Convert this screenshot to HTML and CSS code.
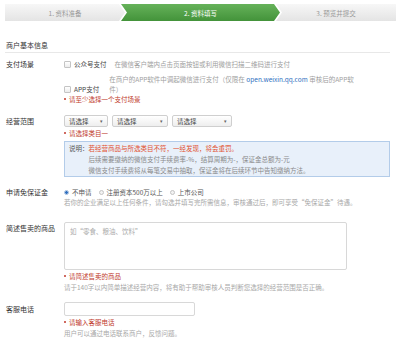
FILE: index.html
```html
<!DOCTYPE html>
<html lang="zh-CN">
<head>
  <meta charset="UTF-8" />
  <title>资料填写</title>
  <link rel="stylesheet" href="styles.css">
</head>
<body>
  <div class="steps">
    <div class="step step-first">1. 资料准备</div>
    <div class="step step-active">2. 资料填写</div>
    <div class="step step-last">3. 预览并提交</div>
  </div>

  <div class="section-title">商户基本信息</div>

  <!-- 支付场景 -->
  <div class="field field-pay">
    <div class="label">支付场景</div>
    <div class="control">
      <div class="option">
        <label class="check"><span class="box"></span>公众号支付</label>
        <span class="desc desc-mp">在微信客户端内点击页面按钮或利用微信扫描二维码进行支付</span>
      </div>
      <div class="option option-app">
        <label class="check"><span class="box"></span>APP支付</label>
        <span class="desc desc-app">在商户的APP软件中调起微信进行支付（仅限在 <span class="link">open.weixin.qq.com</span> 审核后的APP软<br>件）</span>
      </div>
      <div class="error">请至少选择一个支付场景</div>
    </div>
  </div>

  <!-- 经营范围 -->
  <div class="field field-scope">
    <div class="label label-select">经营范围</div>
    <div class="control">
      <div class="selects">
        <div class="select sel-1">请选择<span class="caret">▾</span></div>
        <div class="select sel-2">请选择<span class="caret">▾</span></div>
        <div class="select sel-3">请选择<span class="caret">▾</span></div>
      </div>
      <div class="error">请选择类目一</div>
      <div class="notice">
        <span class="notice-head">说明：</span>
        <div class="notice-body">
          <span class="warn">若经营商品与所选类目不符，一经发现，将会重罚。</span><br>
          后续需要缴纳的微信支付手续费率-%，结算周期为-，保证金总额为-元<br>
          微信支付手续费将从每笔交易中抽取，保证金将在后续环节中告知缴纳方法。
        </div>
      </div>
    </div>
  </div>

  <!-- 申请免保证金 -->
  <div class="field field-deposit">
    <div class="label">申请免保证金</div>
    <div class="control">
      <div class="radios">
        <label class="radio on"><span class="dot"></span>不申请</label>
        <label class="radio"><span class="dot"></span>注册资本500万以上</label>
        <label class="radio"><span class="dot"></span>上市公司</label>
      </div>
      <div class="help">若你的企业满足以上任何条件，请勾选并填写完所需信息，审核通过后，即可享受“免保证金”待遇。</div>
    </div>
  </div>

  <!-- 简述售卖的商品 -->
  <div class="field field-goods">
    <div class="label label-area">简述售卖的商品</div>
    <div class="control">
      <textarea class="area" placeholder="如“零食、粮油、饮料”"></textarea>
      <div class="error">请简述售卖的商品</div>
      <div class="help">请于140字以内简单描述经营内容，将有助于帮助审核人员判断您选择的经营范围是否正确。</div>
    </div>
  </div>

  <!-- 客服电话 -->
  <div class="field field-phone">
    <div class="label label-input">客服电话</div>
    <div class="control">
      <input class="text" type="text" />
      <div class="error">请输入客服电话</div>
      <div class="help">用户可以通过电话联系商户，反馈问题。</div>
    </div>
  </div>
</body>
</html>
```

FILE: styles.css
```css
body {
  margin: 0;
  background: #fff;
  color: #444;
  font-family: "Noto Sans CJK SC", "Noto Sans", sans-serif;
  font-size: 6.5px;
  line-height: 10px;
}

/* step bar */
.steps {
  display: flex;
  margin: 4px 0 0 5px;
  height: 17px;
}

.step {
  display: flex;
  align-items: center;
  justify-content: center;
  height: 17px;
  color: #999;
  background: linear-gradient(#f7f7f7, #e4e4e4);
}

.step-first {
  width: 120px;
  clip-path: polygon(0 0, calc(100% - 6px) 0, 100% 50%, calc(100% - 6px) 100%, 0 100%);
}

.step-active {
  width: 159px;
  margin-left: -4px;
  color: #fff;
  background: linear-gradient(#66b25a, #43933a);
  clip-path: polygon(0 0, calc(100% - 6px) 0, 100% 50%, calc(100% - 6px) 100%, 0 100%, 6px 50%);
}

.step-last {
  width: 120px;
  margin-left: -4px;
  clip-path: polygon(0 0, 100% 0, 100% 100%, 0 100%, 6px 50%);
}

.section-title {
  margin: 19px 8px 0 5px;
  padding: 0 0 2px 1px;
  border-bottom: 1px solid #e8e8e8;
  color: #333;
  font-size: 7px;
}

/* form rows */
.field {
  display: grid;
  grid-template-columns: 58px 1fr;
  padding-left: 6px;
}

.label {
  color: #333;
  font-size: 7px;
}

.field-pay { margin-top: 6px; }
.field-scope { margin-top: 11px; }
.field-deposit { margin-top: 10px; }
.field-goods { margin-top: 15px; }
.field-phone { margin-top: 10px; }

.label-select { line-height: 12px; }
.label-area { padding-top: 1px; }
.label-input { line-height: 14px; }

.option {
  display: flex;
  align-items: flex-end;
}

.option-app {
  margin-top: 5px;
}

.check {
  display: flex;
  align-items: center;
  color: #444;
}

.box {
  width: 5px;
  height: 5px;
  margin-right: 3px;
  border: 1px solid #c4c4c4;
  border-radius: 1px;
  background: linear-gradient(#fff, #ececec);
}

.desc {
  color: #a0a0a0;
}

.desc-mp {
  margin-left: 8px;
}

.desc-app {
  margin-left: 10px;
}

.link {
  color: #2f6fc0;
}

.error {
  display: flex;
  align-items: center;
  color: #c0392b;
}

.error::before {
  content: "";
  width: 2px;
  height: 2px;
  margin-right: 3px;
  border-radius: 50%;
  background: #c0392b;
}

/* selects */
.selects {
  display: flex;
  gap: 4px;
}

.select {
  display: flex;
  align-items: center;
  justify-content: space-between;
  box-sizing: border-box;
  height: 12px;
  padding: 0 4px 0 4px;
  border: 1px solid #cfcfcf;
  border-radius: 2px;
  background: linear-gradient(#fff, #eeeeee);
  color: #444;
}

.sel-1 { width: 44px; }
.sel-2 { width: 56px; }
.sel-3 { width: 60px; }

.caret {
  color: #666;
  font-size: 5px;
}

.selects + .error {
  margin-top: 1px;
}

.notice {
  display: flex;
  margin: 3px 8px 0 0;
  padding: 1px 4px 0;
  border: 1px solid #b3cce9;
  background: #e8f0fa;
  color: #8a8a8a;
  line-height: 11px;
}

.notice-head {
  color: #555;
  white-space: nowrap;
}

.warn {
  color: #e2502f;
}

/* radios */
.radios {
  display: flex;
  gap: 7px;
}

.radio {
  display: flex;
  align-items: center;
  color: #555;
}

.dot {
  box-sizing: border-box;
  width: 5px;
  height: 5px;
  margin-right: 3px;
  border: 1px solid #c4c4c4;
  border-radius: 50%;
  background: #f2f2f2;
}

.radio.on .dot {
  border-color: #9fb9dc;
  background: radial-gradient(circle, #2f6fc0 0 1.3px, #fff 1.6px);
}

.help {
  color: #a8a8a8;
}

/* inputs */
.area {
  display: block;
  box-sizing: border-box;
  width: 283px;
  height: 48px;
  margin: 0;
  padding: 3px 5px;
  border: 1px solid #d8d8d8;
  border-radius: 2px;
  resize: none;
  font-family: inherit;
  font-size: 6.5px;
  line-height: 10px;
}

.area::placeholder {
  color: #aaa;
}

.area + .error,
.text + .error {
  margin-top: 1px;
}

.error + .help {
  margin-top: 1px;
}

.text {
  display: block;
  box-sizing: border-box;
  width: 131px;
  height: 14px;
  margin: 0;
  border: 1px solid #d8d8d8;
  border-radius: 2px;
}
```
